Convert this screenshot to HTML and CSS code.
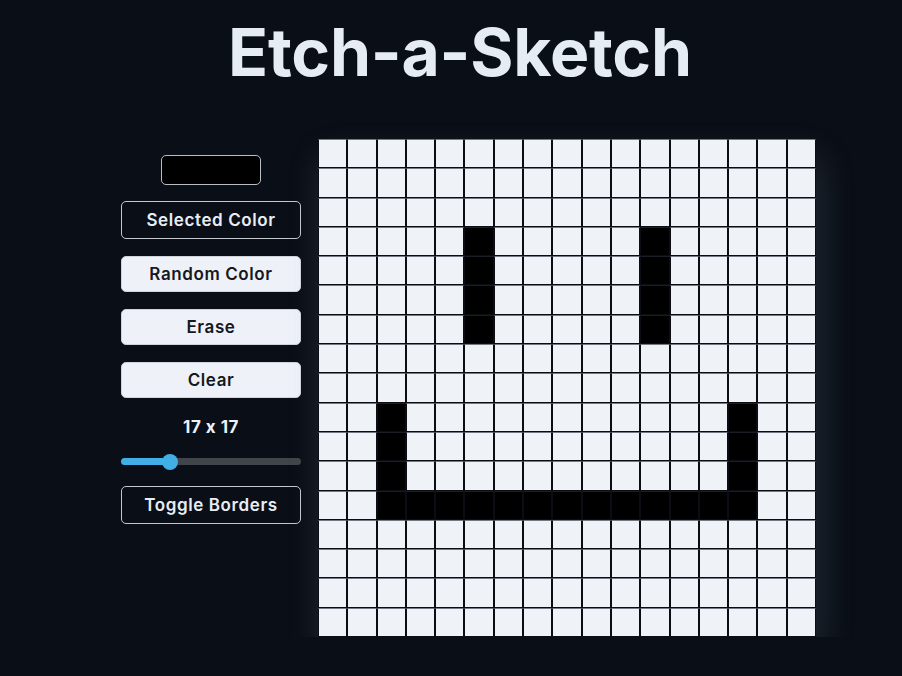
FILE: index.html
```html
<!DOCTYPE html>
<html>
<head>
<meta charset="utf-8">
<title>Etch-a-Sketch</title>
<link rel="stylesheet" href="styles.css">
</head>
<body>
<h1 class="title">Etch-a-Sketch</h1>
<main class="app">
  <section class="controls">
    <div class="swatch"></div>
    <button class="btn btn-outline">Selected Color</button>
    <button class="btn btn-light">Random Color</button>
    <button class="btn btn-light">Erase</button>
    <button class="btn btn-light">Clear</button>
    <div class="size-label">17 x 17</div>
    <input class="slider" type="range" min="1" max="65" value="17">
    <button class="btn btn-outline">Toggle Borders</button>
  </section>
  <section class="board" id="board"></section>
</main>
<script src="script.js"></script>
</body>
</html>
```

FILE: styles.css
```css
* { box-sizing: border-box; }
html, body {
  margin: 0;
  background: #0a0f17;
  font-family: "Inter", "DejaVu Sans", sans-serif;
  color: #e6ecf4;
}
.title {
  margin: 0;
  padding: 12px 0 0 18px;
  text-align: center;
  font-size: 66px;
  font-weight: 700;
  letter-spacing: -0.2px;
  line-height: 80px;
  color: #e6ecf4;
}
.app {
  display: flex;
  align-items: flex-start;
  gap: 17px;
  margin: 47px 0 0 121px;
}
.controls {
  width: 180px;
  display: flex;
  flex-direction: column;
  align-items: center;
  padding-top: 16px;
}
.swatch {
  width: 100px;
  height: 30px;
  background: #000;
  border: 1px solid #b9bec6;
  border-radius: 5px;
  margin-bottom: 16px;
}
.btn {
  width: 180px;
  border-radius: 5px;
  font-family: inherit;
  font-size: 17px;
  font-weight: 600;
  letter-spacing: 0.6px;
  margin-bottom: 17px;
  cursor: pointer;
}
.btn-outline {
  background: transparent;
  color: #e8edf5;
  border: 1px solid #c4c8ce;
  height: 38px;
}
.btn-light {
  background: #eef2f8;
  color: #15181d;
  border: 1px solid #cfd4db;
  height: 36px;
}
.size-label {
  font-size: 17px;
  font-weight: 700;
  letter-spacing: 0.5px;
  margin-top: 1px;
  line-height: 22px;
  color: #eef2f8;
}
.slider {
  -webkit-appearance: none;
  appearance: none;
  width: 180px;
  height: 7px;
  margin: 20px 0 21px;
  border-radius: 4px;
  background: linear-gradient(to right, #41aee6 0%, #41aee6 28%, #414448 28%, #414448 100%);
  outline: none;
}
.slider::-webkit-slider-thumb {
  -webkit-appearance: none;
  appearance: none;
  width: 16px;
  height: 16px;
  border-radius: 50%;
  background: #41aee6;
  border: none;
}
.board {
  width: 498px;
  height: 498px;
  display: grid;
  grid-template-columns: repeat(17, 1fr);
  grid-template-rows: repeat(17, 1fr);
  background: #0a0f17;
  box-shadow: 4px 18px 32px rgba(120, 130, 150, 0.24);
}
.cell {
  background: #eff3f8;
  border: 1px solid #0a0e14;
  border-top-color: #737a84;
}
.cell.on {
  background: #000;
  border-top-color: #1a1e24;
}
```

FILE: script.js
```js
const board = document.getElementById('board');
const on = new Set();
for (let r = 3; r <= 6; r++) { on.add(r * 17 + 5); on.add(r * 17 + 11); }
for (let r = 9; r <= 12; r++) { on.add(r * 17 + 2); on.add(r * 17 + 14); }
for (let c = 2; c <= 14; c++) on.add(12 * 17 + c);
for (let i = 0; i < 17 * 17; i++) {
  const d = document.createElement('div');
  d.className = on.has(i) ? 'cell on' : 'cell';
  board.appendChild(d);
}
```
